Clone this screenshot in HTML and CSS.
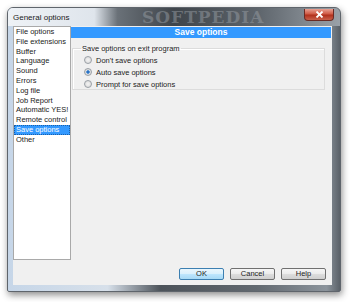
FILE: index.html
```html
<!DOCTYPE html>
<html lang="en">
<head>
    <meta charset="UTF-8">
    <title>General options</title>
    <link rel="stylesheet" href="styles.css">
</head>
<body>

    <div class="window">
        <!-- Title bar -->
        <div class="titlebar">
            <span class="title">General options</span>
            <span class="watermark">SOFTPEDIA</span>
            <button class="close" type="button">
                <svg width="9" height="7" viewBox="0 0 9 7">
                    <path d="M1.5 0.5 L7.5 6.5 M7.5 0.5 L1.5 6.5" stroke="#fff" stroke-width="1.8"/>
                </svg>
            </button>
        </div>

        <div class="client">
            <div class="main">
                <ul class="list">
                    <li>File options</li>
                    <li>File extensions</li>
                    <li>Buffer</li>
                    <li>Language</li>
                    <li>Sound</li>
                    <li>Errors</li>
                    <li>Log file</li>
                    <li>Job Report</li>
                    <li>Automatic YES!</li>
                    <li>Remote control</li>
                    <li class="selected">Save options</li>
                    <li>Other</li>
                </ul>

                <div class="panel">
                    <div class="panel-header">Save options</div>
                    <fieldset class="group">
                        <legend>Save options on exit program</legend>
                        <label class="radio"><span class="dot"></span>Don't save options</label>
                        <label class="radio"><span class="dot checked"></span>Auto save options</label>
                        <label class="radio"><span class="dot"></span>Prompt for save options</label>
                    </fieldset>
                </div>
            </div>

            <!-- Buttons -->
            <div class="buttons">
                <button type="button" class="btn default">OK</button>
                <button type="button" class="btn">Cancel</button>
                <button type="button" class="btn">Help</button>
            </div>
        </div>
    </div>

</body>
</html>
```

FILE: styles.css
```css
* {
    box-sizing: border-box;
    font-family: "Liberation Sans", Arial, sans-serif;
}

body {
    background: #fff;
    margin: 0;
    width: 350px;
    height: 302px;
    overflow: hidden;
}

.window {
    margin: 7px 0 0 7px;
    width: 334px;
    height: 285px;
    padding: 0 8px 7px 5px;
    border: 1px solid #5f656c;
    border-radius: 6px 6px 2px 2px;
    background: linear-gradient(to right, #c6d6e8 0, #d7e0ea 30%, #4c535a 46%, #626970 75%, #8c949c 96%, #5a6168 100%);
    box-shadow: 1px 3px 7px rgba(0, 0, 0, 0.45);
}

.titlebar {
    position: relative;
    height: 18px;
    display: flex;
    align-items: center;
    background: linear-gradient(to right, #eef2f6 0, #dfe5ec 26%, #6a7178 33%, #3f454b 50%, #5d646b 75%, #9aa1a8 100%);
    margin: 0 -8px 0 -5px;
    padding-left: 5px;
    border-radius: 5px 5px 0 0;
}

.title {
    font-size: 8px;
    color: #1a1a1a;
}

.watermark {
    position: absolute;
    left: 134px;
    top: -1px;
    font-family: "DejaVu Serif", serif;
    font-size: 17px;
    font-weight: bold;
    letter-spacing: 1px;
    color: rgba(150, 156, 162, 0.5);
}

.close {
    position: absolute;
    right: 6px;
    top: 1px;
    width: 30px;
    height: 12px;
    padding: 0;
    border: 1px solid #6a2a24;
    border-top: none;
    border-radius: 0 0 4px 4px;
    background: linear-gradient(#e8a193 0, #cf5a45 45%, #b0301c 55%, #c8604a 100%);
    display: flex;
    align-items: center;
    justify-content: center;
}

.client {
    background: #f0f0f0;
    height: 259px;
    display: flex;
    flex-direction: column;
}

.main {
    display: flex;
    height: 234px;
}

.list {
    width: 58px;
    margin: 0;
    padding: 0;
    list-style: none;
    background: #fff;
    border: 1px solid #a9a9a9;
}

.list li {
    height: 9.8px;
    line-height: 9.8px;
    font-size: 7.5px;
    padding-left: 2px;
    color: #222;
    white-space: nowrap;
    overflow: hidden;
}

.list li.selected {
    background: #3399ff;
    color: #fff;
    outline: 1px dotted #1a5fa8;
    outline-offset: -1px;
}

.panel {
    flex: 1;
    display: flex;
    flex-direction: column;
}

.panel-header {
    height: 11px;
    margin: 1px 1px 0 0;
    background: #3399ff;
    color: #fff;
    font-size: 8.5px;
    font-weight: bold;
    line-height: 11px;
    text-align: center;
}

.group {
    margin: 6px 7px 0 1px;
    padding: 1px 0 0 11px;
    height: 46px;
    border: 1px solid #dcdcdc;
    box-shadow: inset 1px 1px 0 #fff;
}

.group legend {
    font-size: 7.5px;
    padding: 0 1px;
    margin-left: -3px;
    color: #222;
}

.radio {
    display: flex;
    align-items: center;
    height: 12px;
    font-size: 7.5px;
    color: #222;
}

.dot {
    width: 8px;
    height: 8px;
    margin-right: 4px;
    border-radius: 50%;
    border: 1px solid #9aa0a6;
    background: radial-gradient(circle, #f4f4f4 0, #d6d6d6 100%);
}

.dot.checked {
    background: radial-gradient(circle, #1d5fb0 0, #3d86d4 35%, #e4e4e4 45%, #d0d0d0 100%);
}

.buttons {
    display: flex;
    justify-content: flex-end;
    gap: 6px;
    padding: 8px 6px 0 0;
}

.btn {
    width: 45px;
    height: 12px;
    padding: 0;
    font-size: 7.5px;
    line-height: 10px;
    color: #222;
    border: 1px solid #707070;
    border-radius: 2px;
    background: linear-gradient(#f6f6f6 0, #ebebeb 50%, #dddddd 51%, #cfcfcf 100%);
}

.btn.default {
    border-color: #3c7fb1;
    background: linear-gradient(#eaf6fd 0, #d9f0fc 50%, #bee6fd 51%, #a7d9f5 100%);
}
```
